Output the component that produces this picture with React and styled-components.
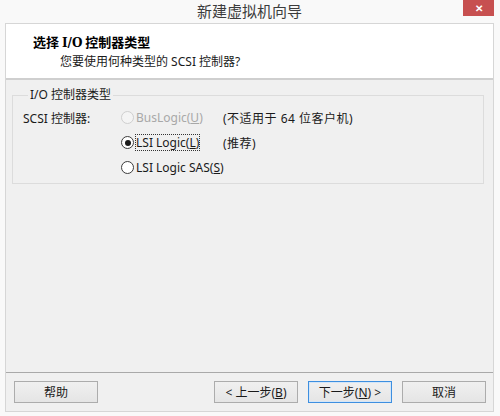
import React from "react";
import styled, { createGlobalStyle } from "styled-components";

const GlobalStyle = createGlobalStyle`
  html, body {
    margin: 0;
    padding: 0;
    background: #f9f9f9;
  }
  body {
    font-family: "Noto Sans", "Noto Sans CJK SC", sans-serif;
    font-size: 12px;
    color: #000;
  }
`;

const App = () => {
  return (
    <>
      <GlobalStyle />
      <Window>
        <TitleBar>
          <Title>新建虚拟机向导</Title>
          <CloseButton>✕</CloseButton>
        </TitleBar>
        <Client>
          <Header>
            <HeaderTitle>
              选择 <Latin>I/O</Latin> 控制器类型
            </HeaderTitle>
            <HeaderSub>您要使用何种类型的 SCSI 控制器?</HeaderSub>
          </Header>
          <Body>
            <Group>
              <Legend>I/O 控制器类型</Legend>
              <Options>
                <FieldLabel>SCSI 控制器:</FieldLabel>
                <Option $disabled>
                  <Radio $disabled />
                  <span>
                    BusLogic(<u>U</u>)
                  </span>
                </Option>
                <Note>(不适用于 64 位客户机)</Note>

                <span />
                <Option>
                  <Radio $checked />
                  <Focus>
                    LSI Logic(<u>L</u>)
                  </Focus>
                </Option>
                <Note>(推荐)</Note>

                <span />
                <Option>
                  <Radio />
                  <span>
                    LSI Logic SAS(<u>S</u>)
                  </span>
                </Option>
                <span />
              </Options>
            </Group>
          </Body>
          <Footer>
            <Button>帮助</Button>
            <Spacer />
            <Button>
              &lt; 上一步(<u>B</u>)
            </Button>
            <Button $primary>
              下一步(<u>N</u>) &gt;
            </Button>
            <Button>取消</Button>
          </Footer>
        </Client>
      </Window>
    </>
  );
};

export default App;

const Window = styled.div`
  width: 500px;
  height: 416px;
  box-sizing: border-box;
  display: flex;
  flex-direction: column;
  padding: 0 6px 4px 5px;
`;

const TitleBar = styled.div`
  position: relative;
  height: 23px;
  display: flex;
  align-items: center;
  justify-content: center;
`;

const Title = styled.div`
  font-family: "Noto Sans CJK SC", sans-serif;
  font-size: 15px;
  color: #3c3c3c;
  margin-top: -2px;
`;

const CloseButton = styled.div`
  position: absolute;
  top: 0;
  right: 0;
  width: 31px;
  height: 16px;
  background: #c75050;
  color: #fff;
  font-size: 10px;
  font-weight: bold;
  display: flex;
  align-items: center;
  justify-content: center;
`;

const Client = styled.div`
  flex: 1;
  display: flex;
  flex-direction: column;
  border: 1px solid #d6d6d6;
  background: #f0f0f0;
`;

const Header = styled.div`
  height: 45px;
  background: #fff;
  border-bottom: 2px solid #cfcfcf;
  padding: 9px 0 0 27px;
  box-sizing: content-box;
`;

const HeaderTitle = styled.div`
  font-family: "Noto Sans CJK SC", sans-serif;
  font-weight: bold;
  font-size: 13px;
  line-height: 18px;
`;

const Latin = styled.span`
  font-family: "DejaVu Serif", serif;
  font-size: 12px;
`;

const HeaderSub = styled.div`
  margin: 1px 0 0 27px;
  line-height: 18px;
  color: #1a1a1a;
`;

const Body = styled.div`
  flex: 1;
  padding: 7px 9px 0 6px;
`;

const Group = styled.fieldset`
  margin: 0;
  padding: 2px 0 0 10px;
  height: 97px;
  box-sizing: border-box;
  border: 1px solid #dcdcdc;
  border-radius: 0;
`;

const Legend = styled.legend`
  margin-left: 5px;
  padding: 0 2px;
  line-height: 16px;
  color: #1a1a1a;
`;

const Options = styled.div`
  display: grid;
  grid-template-columns: 98px 101px 1fr;
  grid-auto-rows: 25px;
  align-items: center;
  color: #1a1a1a;
  white-space: nowrap;
`;

const FieldLabel = styled.span`
  color: #1a1a1a;
`;

const Option = styled.label`
  display: flex;
  align-items: center;
  gap: 2px;
  white-space: nowrap;
  color: ${(p) => (p.$disabled ? "#a8a8a8" : "#1a1a1a")};
`;

const Radio = styled.span`
  width: 11px;
  height: 11px;
  border-radius: 50%;
  border: 1px solid ${(p) => (p.$disabled ? "#cfcfcf" : "#3c3c3c")};
  background: ${(p) => (p.$disabled ? "#f4f4f4" : "#fff")};
  display: flex;
  align-items: center;
  justify-content: center;
  flex-shrink: 0;

  &::after {
    content: "";
    display: ${(p) => (p.$checked ? "block" : "none")};
    width: 6px;
    height: 6px;
    border-radius: 50%;
    background: #1a1a1a;
  }
`;

const Focus = styled.span`
  outline: 1px dotted #333;
  outline-offset: 0;
  line-height: 15px;
`;

const Note = styled.span`
  padding-left: 1px;
  color: #1a1a1a;
  letter-spacing: 0.5px;
`;

const Footer = styled.div`
  border-top: 1px solid #a9a9a9;
  display: flex;
  align-items: center;
  gap: 10px;
  padding: 8px 7px 8px 8px;
`;

const Spacer = styled.div`
  flex: 1;
`;

const Button = styled.button`
  width: 84px;
  height: 22px;
  padding: 0;
  font-family: "Noto Sans", "Noto Sans CJK SC", sans-serif;
  font-size: 12px;
  color: #1a1a1a;
  background: linear-gradient(#f0f0f0, #e5e5e5);
  border: 1px solid ${(p) => (p.$primary ? "#3d8fe0" : "#acacac")};
  box-shadow: ${(p) => (p.$primary ? "inset 0 0 0 1px #d4e6f8" : "none")};
  border-radius: 0;
  display: flex;
  align-items: center;
  justify-content: center;
`;
